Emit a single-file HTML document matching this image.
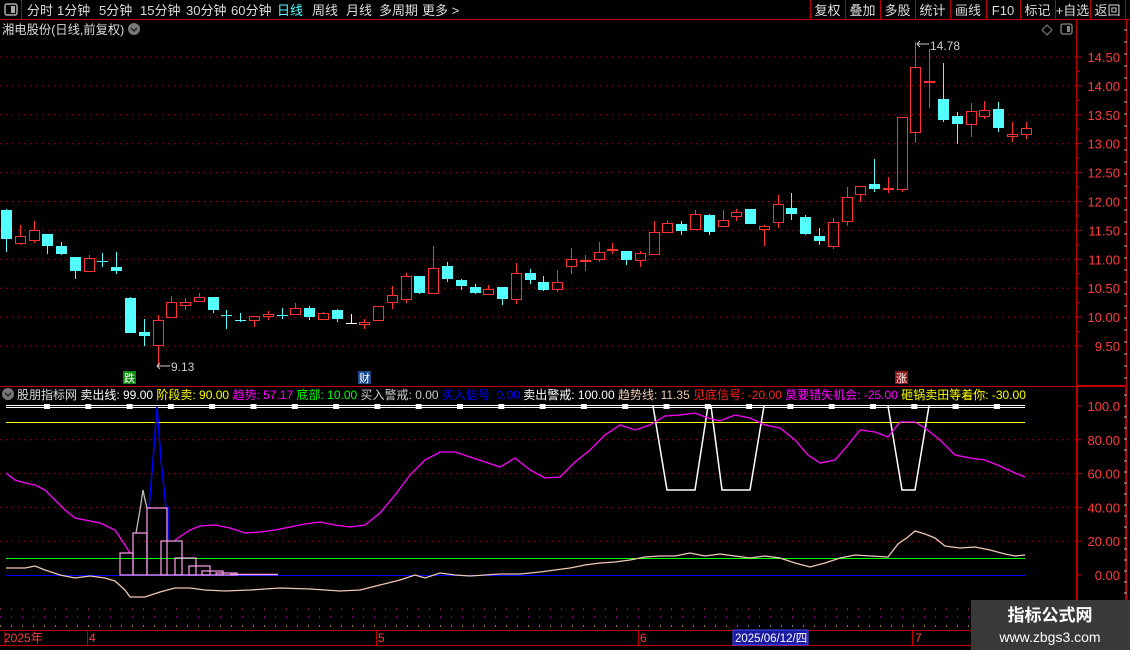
<!DOCTYPE html>
<html><head><meta charset="utf-8"><style>
html,body{margin:0;padding:0;background:#000;width:1130px;height:650px;overflow:hidden;font-family:"Liberation Sans","Noto Sans CJK SC",sans-serif;}
svg{position:absolute;left:0;top:0}
text{font-family:"Liberation Sans","Noto Sans CJK SC",sans-serif}
</style></head><body>
<svg id="s" width="1130" height="650" viewBox="0 0 1130 650" xmlns="http://www.w3.org/2000/svg"></svg>
<script>
var o='';
var R='#ff3232',C='#54ffff',AX='#c00000';
o+='<line x1="0" y1="19.5" x2="1130" y2="19.5" stroke="'+AX+'"/>';
o+='<line x1="21.5" y1="0" x2="21.5" y2="19" stroke="'+AX+'"/>';
o+='<rect x="5" y="4" width="12" height="11" rx="2" fill="none" stroke="#aaa" stroke-width="1.5"/><rect x="11" y="6" width="4" height="7" fill="#aaa"/>';
var m=[['分时',27],['1分钟',57],['5分钟',99],['15分钟',140],['30分钟',186],['60分钟',231],['日线',277],['周线',312],['月线',346],['多周期',379],['更多 >',422]];
m.forEach(function(a){o+='<text x="'+a[1]+'" y="15" font-size="13" fill="'+(a[0]=='日线'?'#54ffff':'#ddd')+'">'+a[0]+'</text>';});
var b=['复权','叠加','多股','统计','画线','F10','标记','+自选','返回'],bx=[810,845,880,915,950,986,1020,1055,1090,1125];
for(var i=0;i<b.length;i++){o+='<line x1="'+(bx[i]+.5)+'" y1="0" x2="'+(bx[i]+.5)+'" y2="19" stroke="'+AX+'"/>';o+='<text x="'+((bx[i]+bx[i+1])/2)+'" y="15" font-size="13" fill="#ddd" text-anchor="middle">'+b[i]+'</text>';}
o+='<line x1="1125.5" y1="0" x2="1125.5" y2="19" stroke="'+AX+'"/>';
o+='<text x="2" y="34" font-size="12.3" fill="#ddd">湘电股份(日线,前复权)</text>';
o+='<circle cx="134" cy="29" r="6" fill="#777"/><path d="M131 28 L134 31 L137 28" stroke="#222" stroke-width="1.5" fill="none"/>';
o+='<path d="M1047 25 L1052 30 L1047 35 L1042 30 Z" fill="none" stroke="#888"/>';
o+='<rect x="1061" y="24" width="11" height="10" rx="2" fill="none" stroke="#888" stroke-width="1.3"/><rect x="1067" y="26" width="3" height="6" fill="#888"/>';
o+='<line x1="1076.5" y1="20" x2="1076.5" y2="630" stroke="'+AX+'"/>';
o+='<line x1="1126.5" y1="20" x2="1126.5" y2="650" stroke="'+AX+'"/>';
o+='<line x1="0" y1="386.5" x2="1076" y2="386.5" stroke="'+AX+'"/>';
o+='<rect x="1077" y="386" width="49" height="244" fill="none" stroke="'+AX+'" stroke-width="2"/>';
o+='<line x1="0" y1="630.5" x2="1130" y2="630.5" stroke="'+AX+'"/>';
o+='<line x1="0" y1="645.5" x2="1130" y2="645.5" stroke="'+AX+'"/>';
var pl=['14.50','14.00','13.50','13.00','12.50','12.00','11.50','11.00','10.50','10.00','9.50'];
pl.forEach(function(t,k){var y=57+k*28.9;o+='<line x1="0" y1="'+y+'" x2="1076" y2="'+y+'" stroke="#a01010" stroke-dasharray="1.5 4.5"/>';o+='<line x1="1077" y1="'+y+'" x2="1082" y2="'+y+'" stroke="'+AX+'"/>';o+='<text x="1120" y="'+(y+5)+'" font-size="13" fill="#ff3c3c" text-anchor="end">'+t+'</text>';if(k<10)o+='<line x1="1077" y1="'+(y+14.45)+'" x2="1080" y2="'+(y+14.45)+'" stroke="'+AX+'"/>';});
var bl=['100.0','80.00','60.00','40.00','20.00','0.00'];
bl.forEach(function(t,k){var y=406+k*33.8;if(k>0&&k<5)o+='<line x1="0" y1="'+y+'" x2="1076" y2="'+y+'" stroke="#a01010" stroke-dasharray="1.5 4.5"/>';o+='<line x1="1077" y1="'+y+'" x2="1082" y2="'+y+'" stroke="'+AX+'"/>';o+='<text x="1120" y="'+(y+5)+'" font-size="13" fill="#ff3c3c" text-anchor="end">'+t+'</text>';});
for(var y=395;y<630;y+=11)o+='<line x1="1124" y1="'+y+'" x2="1127" y2="'+y+'" stroke="#bbb"/>';
for(var y=30;y<386;y+=12)o+='<line x1="1124" y1="'+y+'" x2="1127" y2="'+y+'" stroke="#bbb"/>';
var K=[['c',210,239,209,252],['r',236,244,225,245],['r',230,241,221,243],['c',234,246,234,254],['c',246,254,242,255],['c',257,271,257,279],['r',258,272,255,272],['c',261,262,253,267],['c',267,271,252,274],
['c',298,333,297,333],['c',332,336,319,346],['r',320,346,315,366],['r',302,318,296,318],['r',302,306,298,310],['r',297,302,293,302],['c',297,310,297,313],['c',315,316,310,329],['c',320,321,313,322],['r',316,321,316,327],['r',314,317,311,320],['c',315,316,308,319],['r',308,315,303,315],['c',308,317,306,320],['r',313,320,312,320],['c',310,319,309,322],['w',323,324,314,324],['r',322,325,319,329],['r',306,321,306,321],['r',295,303,286,309],['r',276,300,273,303],['c',276,293,276,294],['r',268,294,246,294],['c',266,279,262,282],['c',280,286,279,290],['c',287,293,284,294],['r',289,295,285,295],['c',287,299,287,305],['r',273,300,263,304],
['c',273,280,269,284],['c',282,290,276,291],['r',282,290,270,292],['r',259,267,248,274],['r',260,261,255,271],['r',252,260,242,262],['r',249,251,243,254],['c',251,260,251,265],['r',253,261,251,267],['r',232,255,221,255],['r',223,233,220,233],['c',224,231,221,235],['r',214,230,210,230],['c',215,232,214,235],['r',220,227,210,227],['r',212,217,209,221],['c',209,224,209,224],['r',226,230,225,246],['r',204,223,195,228],['c',208,214,193,220],['c',217,234,215,235],['c',236,241,228,245],['r',222,247,218,249],['r',197,222,187,226],['r',186,195,186,202],['c',184,189,159,192],['r',188,189,177,193],['r',117,190,117,192],['r',67,133,42,143],['r',81,83,49,108],['c',99,120,63,122],['c',116,124,112,144],['r',111,125,103,137],['r',110,117,101,119],['c',109,128,102,132],['r',134,137,122,142],['r',128,135,122,139]];
K.forEach(function(k,i){var x=Math.round(6+i*13.78)+.5;var col=k[0]=='r'?R:(k[0]=='c'?C:'#fff');var h=Math.max(1,k[2]-k[1]);
 if(k[0]=='r'){o+='<line x1="'+x+'" y1="'+k[3]+'" x2="'+x+'" y2="'+k[1]+'" stroke="'+col+'"/><line x1="'+x+'" y1="'+k[2]+'" x2="'+x+'" y2="'+k[4]+'" stroke="'+col+'"/>';
  if(h<=2)o+='<rect x="'+(x-5.5)+'" y="'+k[1]+'" width="11" height="2" fill="'+col+'"/>';else o+='<rect x="'+(x-5)+'" y="'+(k[1]+.5)+'" width="10" height="'+(h-1)+'" fill="none" stroke="'+col+'"/>';}
 else{o+='<line x1="'+x+'" y1="'+k[3]+'" x2="'+x+'" y2="'+k[4]+'" stroke="'+col+'"/><rect x="'+(x-5.5)+'" y="'+k[1]+'" width="11" height="'+h+'" fill="'+col+'"/>';}
});
o+='<line x1="157" y1="366" x2="170" y2="366" stroke="#ccc"/><path d="M160 363 L157 366 L160 369" stroke="#ccc" fill="none"/><text x="171" y="371" font-size="12" fill="#ccc">9.13</text>';
o+='<line x1="917" y1="44" x2="929" y2="44" stroke="#ccc"/><path d="M920 41 L917 44 L920 47" stroke="#ccc" fill="none"/><text x="930" y="50" font-size="12" fill="#ccc">14.78</text>';
o+='<rect x="123" y="371" width="13" height="13" fill="#0a8a0a"/><text x="129.5" y="382" font-size="11" fill="#fff" text-anchor="middle">跌</text>';
o+='<rect x="358" y="371" width="13" height="13" fill="#1a4a8a"/><text x="364.5" y="382" font-size="11" fill="#fff" text-anchor="middle">财</text>';
o+='<rect x="895" y="371" width="13" height="13" fill="#8a1a1a"/><text x="901.5" y="382" font-size="11" fill="#fff" text-anchor="middle">涨</text>';
o+='<circle cx="8" cy="394" r="6" fill="#777"/><path d="M5 393 L8 396 L11 393" stroke="#222" stroke-width="1.5" fill="none"/>';
o+='<text x="17" y="399" font-size="12">';
[['股朋指标网 ','#ddd'],['卖出线: 99.00 ','#fff'],['阶段卖: 90.00 ','#ffff00'],['趋势: 57.17 ','#ff00ff'],['底部: 10.00 ','#00ff00'],['买入警戒: 0.00 ','#ccc'],['买入信号: 0.00 ','#0000ff'],['卖出警戒: 100.00 ','#fff'],['趋势线: 11.35 ','#f0c8b4'],['见底信号: -20.00 ','#ff2020'],['莫要错失机会: -25.00 ','#ff00ff'],['砸锅卖田等着你: -30.00','#ffff00']].forEach(function(a){o+='<tspan fill="'+a[1]+'">'+a[0]+'</tspan>';});
o+='</text>';
o+='<line x1="6" y1="405.5" x2="1025" y2="405.5" stroke="#fff"/><line x1="6" y1="407.5" x2="1025" y2="407.5" stroke="#fff"/>';
for(var x=47;x<1025;x+=41.3)o+='<rect x="'+(x-3)+'" y="404" width="6" height="5" fill="#fff"/>';
o+='<line x1="6" y1="422.5" x2="1025" y2="422.5" stroke="#ffff00"/>';
o+='<line x1="6" y1="558.5" x2="1025" y2="558.5" stroke="#00ff00"/>';
o+='<line x1="6" y1="575.5" x2="1025" y2="575.5" stroke="#0000ff"/>';
o+='<path d="M653 406 L667 490 L695 490 L708 406 M711 406 L722 490 L750 490 L764 406 M888 406 L902 490 L915 490 L929 406" stroke="#fff" stroke-width="1.5" fill="none"/>';
function pl_(pts,c,w){o+='<polyline points="'+pts+'" fill="none" stroke="'+c+'" stroke-width="'+(w||1.3)+'"/>';}
pl_('6,473 15,480 25,483 35,485 45,490 55,500 65,510 75,518 85,520 100,523 115,530 125,545 130,553','#ff00ff');
pl_('175,540 190,530 200,526 215,525 230,528 245,533 260,532 275,530 290,527 305,524 320,522 335,525 350,527 365,525 380,513 395,495 410,475 425,460 440,452 455,452 470,457 485,462 500,467 515,458 530,470 545,478 560,477 575,462 590,450 605,435 620,425 635,430 650,425 665,416 680,415 695,413 708,418 720,421 735,415 750,418 765,425 780,428 795,440 808,455 820,463 835,460 848,445 860,430 875,432 888,437 900,422 915,422 925,428 940,440 955,455 970,458 985,460 1000,466 1015,473 1025,477','#ff00ff');
pl_('6,568 25,568 35,566 45,570 60,575 75,578 90,576 105,578 115,581 125,590 130,597 145,597 160,592 175,588 190,588 205,590 225,591 250,590 280,588 310,589 340,591 360,590 380,585 400,580 415,575 425,578 440,573 455,575 470,576 485,575 500,574 520,574 540,572 555,570 570,568 585,565 600,563 615,562 630,560 645,557 660,556 675,556 690,553 705,556 720,554 735,556 750,558 765,556 780,558 795,563 810,567 825,563 840,558 855,555 870,556 888,557 898,544 908,537 915,531 925,534 935,538 945,546 960,548 975,547 990,550 1005,554 1015,556 1025,555','#f0c8b4');
o+='<polyline points="149,508 153,460 157,407 161,460 166,508 169,508 169,540" fill="none" stroke="#0000ff" stroke-width="1.5"/>';
o+='<polyline points="136,533 140,510 143,490 145,500 147,508" fill="none" stroke="#bbb" stroke-width="1.3"/>';
[[120,133,553],[133,147,533],[147,167,508],[161,182,541],[175,196,558],[189,210,566],[202,223,571],[216,237,573]].forEach(function(a){o+='<rect x="'+a[0]+'" y="'+a[2]+'" width="'+(a[1]-a[0])+'" height="'+(575-a[2])+'" fill="none" stroke="#ffa0f0" stroke-width="1.2"/>';});
o+='<line x1="230" y1="574.5" x2="278" y2="574.5" stroke="#ffa0f0" stroke-width="1.5"/>';
o+='<line x1="0" y1="609" x2="970" y2="609" stroke="#ff3c8c" stroke-dasharray="1 10"/><line x1="0" y1="617" x2="970" y2="617" stroke="#ff00ff" stroke-dasharray="1 10"/><line x1="0" y1="626" x2="970" y2="626" stroke="#ffff60" stroke-dasharray="1 10"/>';
o+='<line x1="5" y1="630" x2="5" y2="645" stroke="'+AX+'"/>';
o+='<text x="4" y="642" font-size="12" fill="#ff3c3c">2025年</text><text x="89" y="642" font-size="12" fill="#ff3c3c">4</text><text x="378" y="642" font-size="12" fill="#ff3c3c">5</text><text x="640" y="642" font-size="12" fill="#ff3c3c">6</text><text x="915" y="642" font-size="12" fill="#ff3c3c">7</text>';
o+='<line x1="87.5" y1="630" x2="87.5" y2="645" stroke="'+AX+'"/><line x1="376.5" y1="630" x2="376.5" y2="645" stroke="'+AX+'"/><line x1="638.5" y1="630" x2="638.5" y2="645" stroke="'+AX+'"/><line x1="912.5" y1="630" x2="912.5" y2="645" stroke="'+AX+'"/>';
o+='<rect x="733" y="630" width="75" height="15" fill="#1a1aa0" stroke="#4a4aff"/><text x="735" y="642" font-size="11.5" fill="#fff">2025/06/12/四</text>';
o+='<rect x="971" y="600" width="159" height="50" fill="#3b3838"/><text x="1050" y="621" font-size="17" font-weight="bold" fill="#fff" text-anchor="middle">指标公式网</text><text x="1050" y="642" font-size="14" fill="#fff" text-anchor="middle">www.zbgs3.com</text>';
document.getElementById('s').innerHTML=o;
</script>
</body></html>
